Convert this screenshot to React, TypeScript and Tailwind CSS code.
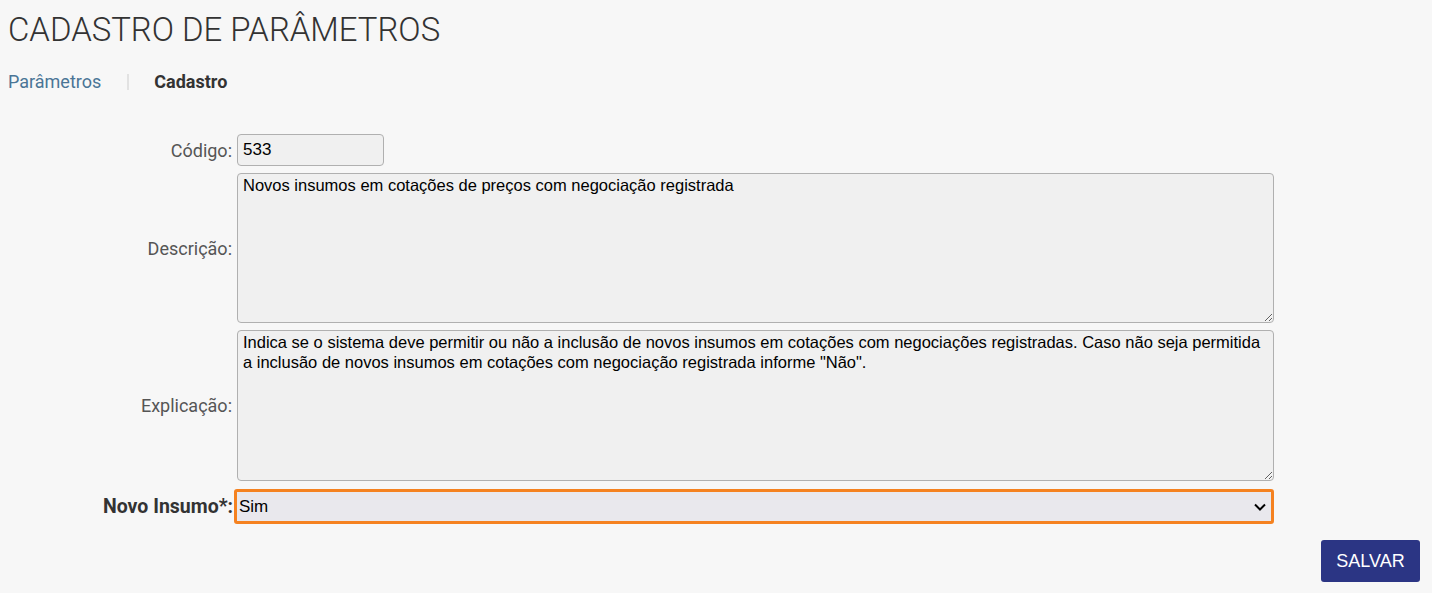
import React from 'react';

const App = () => {
  return (
    <div className="min-h-[593px] w-full bg-[#f7f7f7] font-['Roboto',sans-serif] text-[#333]">
      <div className="px-2 pt-[9px]">
        {/* Título */}
        <h1 className="text-[32.9px] font-light leading-[42px] text-[#333]">CADASTRO DE PARÂMETROS</h1>

        {/* Breadcrumb */}
        <div className="mt-[20px] flex items-center text-[18px] leading-[22px]">
          <span className="text-[#4a7596]">Parâmetros</span>
          <span className="ml-[26px] h-[16px] w-[2px] bg-[#e2e2e2]" />
          <span className="ml-[25px] font-bold text-[#333]">Cadastro</span>
        </div>
      </div>

      {/* Formulário */}
      <div className="mt-[41px] flex flex-col pr-[158px]">
        <div className="flex items-center">
          <label className="w-[233px] pr-[1px] text-right text-[18px] text-[#555]">Código:</label>
          <div className="ml-[4px] flex h-[32px] w-[147px] items-center rounded-[4px] border border-[#b0b0b0] bg-[#f0f0f0] px-[5px] font-['Liberation_Sans',Arial,sans-serif] text-[17px] text-black">
            533
          </div>
        </div>

        <div className="mt-[7px] flex items-center">
          <label className="w-[233px] pr-[1px] text-right text-[18px] text-[#555]">Descrição:</label>
          <textarea
            readOnly
            className="ml-[4px] h-[150px] flex-1 resize-y rounded-[4px] border border-[#b0b0b0] bg-[#f0f0f0] px-[5px] py-[1px] font-['Liberation_Sans',Arial,sans-serif] text-[16.5px] leading-[20px] text-black outline-none"
            defaultValue="Novos insumos em cotações de preços com negociação registrada"
          />
        </div>

        <div className="mt-[7px] flex items-center">
          <label className="w-[233px] pr-[1px] text-right text-[18px] text-[#555]">Explicação:</label>
          <textarea
            readOnly
            className="ml-[4px] h-[151px] flex-1 resize-y rounded-[4px] border border-[#b0b0b0] bg-[#f0f0f0] px-[5px] py-[1px] font-['Liberation_Sans',Arial,sans-serif] text-[16.5px] leading-[20px] text-black outline-none"
            defaultValue={'Indica se o sistema deve permitir ou não a inclusão de novos insumos em cotações com negociações registradas. Caso não seja permitida a inclusão de novos insumos em cotações com negociação registrada informe "Não".'}
          />
        </div>

        <div className="mt-[8px] flex items-center">
          <label className="w-[233px] text-right text-[19.5px] font-bold text-[#333]">Novo Insumo*:</label>
          <div className="relative ml-[1px] flex h-[35px] flex-1 items-center rounded-[3px] border-[3px] border-[#f58220] bg-[#e9e8ed] pl-[2px] font-['Liberation_Sans',Arial,sans-serif] text-[17px] text-black">
            Sim
            <svg className="absolute right-[4px] top-1/2 -translate-y-1/2" width="14" height="14" viewBox="0 0 14 14" fill="none">
              <path d="M2 4.5L7 9.5L12 4.5" stroke="black" strokeWidth="2" />
            </svg>
          </div>
        </div>
      </div>

      <div className="mt-[16px] flex justify-end pr-[12px]">
        <button className="h-[42px] w-[99px] rounded-[3px] bg-[#2b3584] font-['Liberation_Sans',Arial,sans-serif] text-[18px] text-white">
          SALVAR
        </button>
      </div>
    </div>
  );
};

export default App;
